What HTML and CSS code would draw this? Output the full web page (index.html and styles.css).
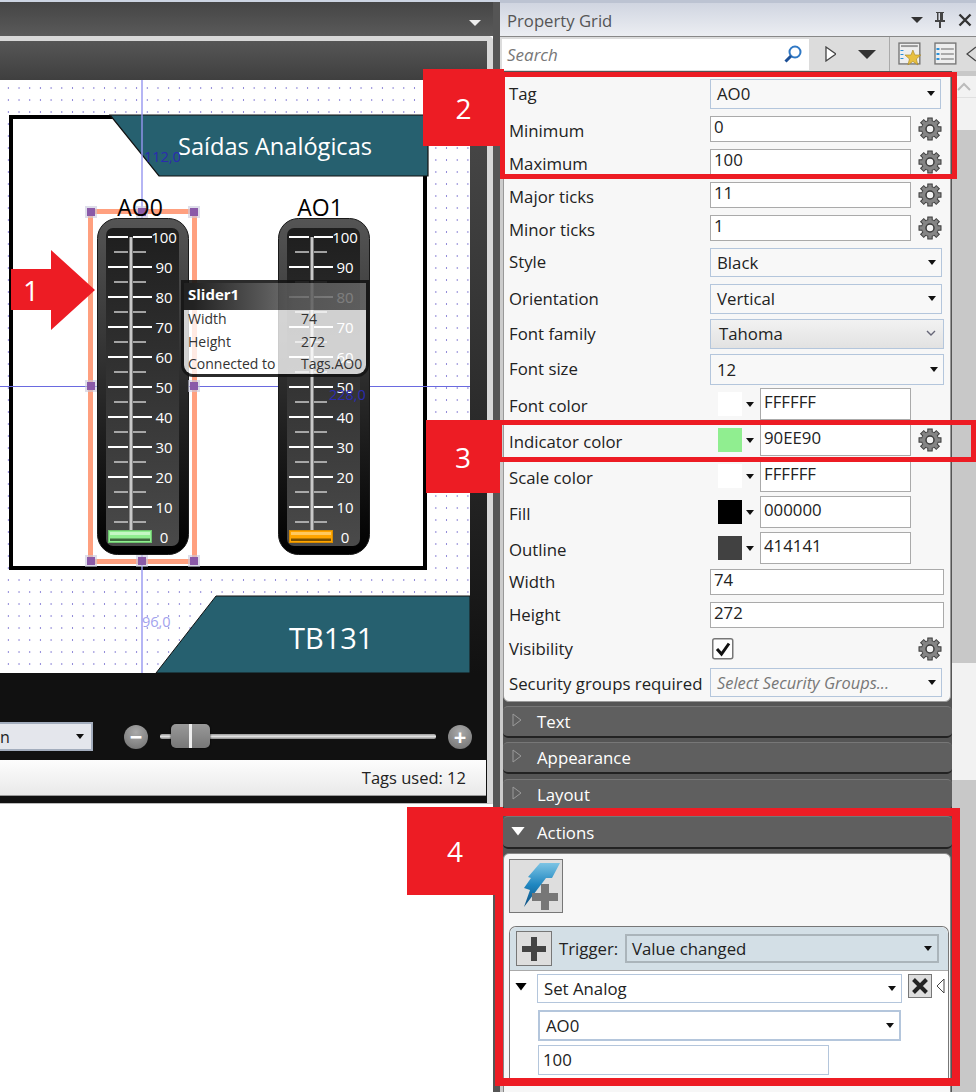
FILE: index.html
```html
<!DOCTYPE html>
<html>
  <head>
    <title>Property Grid</title>
    <link rel="stylesheet" href="styles.css">
  </head>
  <body>
    <svg class="defs" width="0" height="0">
      <defs>
        <linearGradient id="body-grad" x1="0" y1="0" x2="0" y2="1">
          <stop offset="0" stop-color="#555"/>
          <stop offset="1" stop-color="#000"/>
        </linearGradient>
        <linearGradient id="face-grad" x1="0" y1="0" x2="0" y2="1">
          <stop offset="0" stop-color="#1e1e1e"/>
          <stop offset="1" stop-color="#4a4a4a"/>
        </linearGradient>
        <linearGradient id="bolt-grad" x1="0" y1="0" x2="0" y2="1">
          <stop offset="0" stop-color="#7cc4e4"/>
          <stop offset=".5" stop-color="#1f86c0"/>
          <stop offset="1" stop-color="#0d4f80"/>
        </linearGradient>
        <symbol id="gear" viewBox="0 0 24 24">
          <g fill="#858585" stroke="#3c3c3c" stroke-width="1">
            <circle cx="12" cy="12" r="8.4"/>
            <rect x="9.8" y="1" width="4.4" height="5"/>
            <rect x="9.8" y="1" width="4.4" height="5" transform="rotate(45 12 12)"/>
            <rect x="9.8" y="1" width="4.4" height="5" transform="rotate(90 12 12)"/>
            <rect x="9.8" y="1" width="4.4" height="5" transform="rotate(135 12 12)"/>
            <rect x="9.8" y="1" width="4.4" height="5" transform="rotate(180 12 12)"/>
            <rect x="9.8" y="1" width="4.4" height="5" transform="rotate(225 12 12)"/>
            <rect x="9.8" y="1" width="4.4" height="5" transform="rotate(270 12 12)"/>
            <rect x="9.8" y="1" width="4.4" height="5" transform="rotate(315 12 12)"/>
          </g>
          <circle cx="12" cy="12" r="8" fill="#858585"/>
          <circle cx="12" cy="12" r="4" fill="#f4f4f4" stroke="#3c3c3c" stroke-width="1.5"/>
        </symbol>
        <symbol id="gauge" viewBox="0 0 92 338">
          <rect x=".5" y=".5" width="91" height="336" rx="20" fill="url(#body-grad)" stroke="#1a1a1a"/>
          <rect x="9" y="10" width="73" height="318" rx="7" fill="url(#face-grad)"/>
          <g class="major">
            <path d="M11 19H31M36 19H55M11 49H31M36 49H55M11 79H31M36 79H55M11 109H31M36 109H55M11 139H31M36 139H55M11 169H31M36 169H55M11 199H31M36 199H55M11 229H31M36 229H55M11 259H31M36 259H55M11 289H31M36 289H55"/>
          </g>
          <g class="minor">
            <path d="M17 34H31M36 34H49M17 64H31M36 64H49M17 94H31M36 94H49M17 124H31M36 124H49M17 154H31M36 154H49M17 184H31M36 184H49M17 214H31M36 214H49M17 244H31M36 244H49M17 274H31M36 274H49M17 304H31M36 304H49"/>
          </g>
          <rect x="32.5" y="19" width="3" height="294" fill="#c8c8c8"/>
        </symbol>
        <symbol id="tri-open" viewBox="0 0 10 14">
          <path d="M1 1L9 7L1 13Z" fill="none" stroke="#9a9a9a" stroke-width="1"/>
        </symbol>
      </defs>
    </svg>

    <div class="page">
      <div class="left">
        <div class="left-top"><span class="top-caret"></span></div>
        <div class="doc">
          <div class="doc-head"></div>
          <div class="doc-main">
            <div class="canvas">
              <div class="screen"></div>
              <div class="guide-h"></div>
              <svg class="banner-top" width="322" height="64" viewBox="0 0 322 64">
                <polygon points="1,1 319,1 319,62 50,62" fill="#26606f" stroke="#111" stroke-width="1.2"/>
              </svg>
              <div class="guide-v"></div>
              <div class="banner-title">Saídas Analógicas</div>
              <div class="guide-label label-top">112,0</div>

              <svg class="gauge gauge-a" width="92" height="338" viewBox="0 0 92 338">
                <use href="#gauge"/>
                <g class="scale">
                  <text x="67" y="25">100</text><text x="67" y="55">90</text><text x="67" y="85">80</text><text x="67" y="115">70</text>
                  <text x="67" y="145">60</text><text x="67" y="175">50</text><text x="67" y="205">40</text><text x="67" y="235">30</text>
                  <text x="67" y="265">20</text><text x="67" y="295">10</text><text x="67" y="325">0</text>
                </g>
                <rect x="11.5" y="312.5" width="43" height="12" fill="#90ee90" stroke="#6fc46f"/>
                <rect x="13" y="314" width="40" height="3" fill="#c4f7c4"/>
                <rect x="13" y="320.5" width="40" height="2.5" fill="#3f6b3f"/>
              </svg>
              <svg class="gauge gauge-b" width="92" height="338" viewBox="0 0 92 338">
                <use href="#gauge"/>
                <g class="scale">
                  <text x="67" y="25">100</text><text x="67" y="55">90</text><text x="67" y="85">80</text><text x="67" y="115">70</text>
                  <text x="67" y="145">60</text><text x="67" y="175">50</text><text x="67" y="205">40</text><text x="67" y="235">30</text>
                  <text x="67" y="265">20</text><text x="67" y="295">10</text><text x="67" y="325">0</text>
                </g>
                <rect x="11.5" y="312.5" width="43" height="12" fill="#ffa500" stroke="#d98c00"/>
                <rect x="13" y="314" width="40" height="3" fill="#ffc95e"/>
                <rect x="13" y="320.5" width="40" height="2.5" fill="#7a5000"/>
              </svg>

              <div class="selection">
                <span class="handle h-tl"></span><span class="handle h-tc"></span><span class="handle h-tr"></span>
                <span class="handle h-ml"></span><span class="handle h-mr"></span>
                <span class="handle h-bl"></span><span class="handle h-bc"></span><span class="handle h-br"></span>
              </div>

              <div class="gauge-title title-a">AO0</div>
              <div class="gauge-title title-b">AO1</div>

              <div class="tip">
                <div class="tip-head">Slider1</div>
                <div class="tip-body">
                  <span>Width</span><span>74</span>
                  <span>Height</span><span>272</span>
                  <span>Connected to</span><span>Tags.AO0</span>
                </div>
              </div>
              <div class="guide-label label-mid">228,0</div>

              <svg class="banner-bottom" width="316" height="80" viewBox="0 0 316 80">
                <polygon points="61,1 315,1 315,78 1,78" fill="#26606f" stroke="#111" stroke-width="1"/>
              </svg>
              <div class="banner-code">TB131</div>
              <div class="guide-label label-low">96,0</div>
            </div>
            <div class="doc-strip"></div>
          </div>
          <div class="zoom-bar">
            <div class="zoom-select"><span>n</span><i class="caret"></i></div>
            <span class="zoom-btn">&#8722;</span>
            <div class="zoom-track"><span class="zoom-thumb"></span></div>
            <span class="zoom-btn">+</span>
          </div>
          <div class="status">Tags used: 12</div>
        </div>
      </div>

      <div class="divider"></div>

      <div class="side">
        <div class="side-head">
          <span class="side-title">Property Grid</span>
          <i class="head-caret"></i>
          <svg class="pin" width="14" height="18" viewBox="0 0 14 18"><path d="M3 1H11V2H10V9H12V11H8V17H6V11H2V9H4V2H3ZM5.5 2V9H7V2Z" fill="#444"/></svg>
          <svg class="close" width="14" height="14" viewBox="0 0 14 14"><path d="M1.5 1.5L12.5 12.5M12.5 1.5L1.5 12.5" stroke="#333" stroke-width="2.4"/></svg>
        </div>
        <div class="search-row">
          <div class="search-box">
            <span>Search</span>
            <svg width="20" height="20" viewBox="0 0 20 20"><circle cx="12" cy="8" r="5.5" fill="#fff" stroke="#2f78c4" stroke-width="2"/><path d="M8 12L2.5 17.5" stroke="#1c4f96" stroke-width="3"/></svg>
          </div>
          <svg class="tool-play" width="12" height="16" viewBox="0 0 12 16"><path d="M1 1L11 8L1 15Z" fill="#fff" stroke="#444" stroke-width="1.3"/></svg>
          <i class="tool-down"></i>
          <span class="tool-sep"></span>
          <svg class="tool-icon" width="24" height="24" viewBox="0 0 24 24">
            <rect x="1" y="1" width="21" height="21" fill="#eee" stroke="#777" stroke-width="1.4"/>
            <path d="M3 4H20" stroke="#999" stroke-width="2"/>
            <path d="M4 8V9M4 12V13M4 16V17" stroke="#2a90d8" stroke-width="3"/>
            <polygon points="15,8 17,13 23,13 18.5,17 20,23 15,19.5 10,23 11.5,17 7,13 13,13" fill="#e8c040" stroke="#a58320" stroke-width=".6"/>
          </svg>
          <svg class="tool-icon" width="24" height="24" viewBox="0 0 24 24">
            <rect x="1" y="1" width="21" height="21" fill="#eee" stroke="#777" stroke-width="1.4"/>
            <path d="M4 6V8M4 11V13M4 16V18" stroke="#2a90d8" stroke-width="3"/>
            <path d="M7 7H20M7 12H20M7 17H20" stroke="#aaa" stroke-width="2"/>
          </svg>
          <svg class="tool-back" width="10" height="16" viewBox="0 0 10 16"><path d="M10 1L1 8L10 15" fill="none" stroke="#444" stroke-width="1.2"/></svg>
        </div>

        <div class="side-body">
          <div class="side-main">
            <div class="props">
              <div class="prop h30"><label>Tag</label><div class="pick w231"><span>AO0</span><i class="caret"></i></div></div>
              <div class="prop h26 low"><label>Minimum</label><div class="field w201">0</div><svg class="gear"><use href="#gear"/></svg></div>
              <div class="prop h26 low"><label>Maximum</label><div class="field w201">100</div><svg class="gear"><use href="#gear"/></svg></div>
              <div class="prop h26 low"><label>Major ticks</label><div class="field w201">11</div><svg class="gear"><use href="#gear"/></svg></div>
              <div class="prop h26 low"><label>Minor ticks</label><div class="field w201">1</div><svg class="gear"><use href="#gear"/></svg></div>
              <div class="prop h29"><label>Style</label><div class="pick w232"><span>Black</span><i class="caret"></i></div></div>
              <div class="prop h30"><label>Orientation</label><div class="pick w232"><span>Vertical</span><i class="caret"></i></div></div>
              <div class="prop h30 gap5"><label>Font family</label>
                <div class="pick w234 pick-font"><span>Tahoma</span>
                  <svg width="10" height="7" viewBox="0 0 10 7"><path d="M1 1L5 5L9 1" fill="none" stroke="#667" stroke-width="1.4"/></svg>
                </div>
              </div>
              <div class="prop h31 gap5"><label>Font size</label><div class="pick w234"><span>12</span><i class="caret"></i></div></div>
              <div class="prop h32 gap3 low"><label>Font color</label><span class="swatch sw-white"></span><i class="caret sw-caret"></i><div class="field w151 hex">FFFFFF</div></div>
              <div class="prop h32 gap4 low"><label>Indicator color</label><span class="swatch sw-green"></span><i class="caret sw-caret"></i><div class="field w151 hex">90EE90</div><svg class="gear"><use href="#gear"/></svg></div>
              <div class="prop h32 gap4 low"><label>Scale color</label><span class="swatch sw-white"></span><i class="caret sw-caret"></i><div class="field w151 hex">FFFFFF</div></div>
              <div class="prop h32 gap4 low"><label>Fill</label><span class="swatch sw-black"></span><i class="caret sw-caret"></i><div class="field w151 hex">000000</div></div>
              <div class="prop h32 gap4 low"><label>Outline</label><span class="swatch sw-grey"></span><i class="caret sw-caret"></i><div class="field w151 hex">414141</div></div>
              <div class="prop h26 gap5"><label>Width</label><div class="field w234">74</div></div>
              <div class="prop h26"><label>Height</label><div class="field w234">272</div></div>
              <div class="prop h28"><label>Visibility</label>
                <svg class="check" width="22" height="22" viewBox="0 0 22 22"><rect x=".75" y=".75" width="20" height="20" rx="2" fill="#fff" stroke="#777" stroke-width="1.5"/><path d="M5 11L9.5 16L17 5.5" fill="none" stroke="#111" stroke-width="3"/></svg>
                <svg class="gear gear-far"><use href="#gear"/></svg>
              </div>
              <div class="prop h29 gap5 sec-row"><label>Security groups required</label><div class="pick w232 pick-hint"><span>Select Security Groups...</span><i class="caret"></i></div></div>
            </div>

            <div class="section"><svg class="tri-open"><use href="#tri-open"/></svg>Text</div>
            <div class="section"><svg class="tri-open"><use href="#tri-open"/></svg>Appearance</div>
            <div class="section"><svg class="tri-open"><use href="#tri-open"/></svg>Layout</div>
            <div class="section section-open"><i class="tri-down"></i>Actions</div>

            <div class="actions">
              <div class="add-action">
                <svg width="52" height="52" viewBox="0 0 52 52">
                  <polygon points="30,3 50,3 42,18 36,18 14,47 20,30 14,28 21,18 18,17" fill="url(#bolt-grad)"/>
                  <path d="M35 24V50M22 37H48" stroke="#777" stroke-width="8"/>
                </svg>
              </div>
              <div class="trigger">
                <div class="trigger-head">
                  <span class="plus-btn"><svg width="28" height="28" viewBox="0 0 28 28"><path d="M14 2V26M2 14H26" stroke="#444" stroke-width="6"/></svg></span>
                  <span class="trigger-label">Trigger:</span>
                  <div class="pick trigger-pick"><span>Value changed</span><i class="caret"></i></div>
                </div>
                <div class="trigger-body">
                  <div class="act-row">
                    <i class="tri-black"></i>
                    <div class="pick act-pick"><span>Set Analog</span><i class="caret"></i></div>
                    <span class="x-btn"><svg width="18" height="18" viewBox="0 0 18 18"><path d="M2.5 2.5L15.5 15.5M15.5 2.5L2.5 15.5" stroke="#222" stroke-width="4"/></svg></span>
                    <svg class="act-back" width="9" height="16" viewBox="0 0 9 16"><path d="M8 1L1 8L8 15Z" fill="#fff" stroke="#444"/></svg>
                  </div>
                  <div class="pick act-tag"><span>AO0</span><i class="caret"></i></div>
                  <div class="field act-val">100</div>
                </div>
              </div>
            </div>
          </div>
          <div class="scroll">
            <div class="scroll-up"><svg width="14" height="9" viewBox="0 0 14 9"><path d="M1 8L7 2L13 8" fill="none" stroke="#bbb" stroke-width="2"/></svg></div>
            <div class="scroll-thumb"></div>
            <div class="scroll-gap"></div>
            <div class="scroll-rest"></div>
          </div>
        </div>
      </div>
    </div>

    <!-- red callouts drawn over the screenshot -->
    <div class="frame frame-2"></div>
    <div class="frame frame-3"></div>
    <div class="frame frame-4"></div>
    <div class="tag tag-2">2</div>
    <div class="tag tag-3">3</div>
    <div class="tag tag-4">4</div>
    <svg class="arrow" width="84" height="80" viewBox="0 0 84 80"><polygon points="0,19 40,19 40,0 84,40 40,80 40,60 0,60" fill="#ed1c24"/></svg>
    <div class="arrow-num">1</div>
  </body>
</html>
```

FILE: styles.css
```css
html, body {
  margin: 0;
  padding: 0;
}
body {
  position: relative;
  width: 976px;
  height: 1092px;
  overflow: hidden;
  background: #fff;
  font-family: "Open Sans", "Noto Sans", sans-serif;
  font-size: 15px;
  color: #222;
}
.defs {
  position: absolute;
}
.page {
  display: flex;
  height: 1092px;
}
i {
  display: block;
}
.caret {
  width: 0;
  height: 0;
  border: 4px solid transparent;
  border-top: 5px solid #111;
  border-bottom: 0;
}

/* left: designer */
.left {
  width: 493px;
  flex: none;
  background: #fff;
}
.left-top {
  display: flex;
  justify-content: flex-end;
  align-items: center;
  box-sizing: border-box;
  height: 36px;
  padding: 8px 12px 0 0;
  border-top: 2px solid #ccd4e2;
  background: linear-gradient(#454545, #5a5a5a);
}
.top-caret {
  width: 0;
  height: 0;
  border: 6px solid transparent;
  border-top: 6px solid #eee;
  border-bottom: 0;
}
.doc {
  box-sizing: border-box;
  width: 493px;
  height: 768px;
  background: #111;
  border-top: 5px solid #d8d8d8;
  border-right: 6px solid #d8d8d8;
  border-top-right-radius: 5px;
  border-bottom: 1px solid #bbb;
}
.doc-head {
  height: 39px;
  background: linear-gradient(#565656, #3f3f3f);
}
.doc-main {
  display: flex;
  height: 593px;
}
.canvas {
  position: relative;
  width: 470px;
  height: 593px;
  overflow: hidden;
  background-color: #fff;
  background-image: radial-gradient(circle, #8f88d8 .7px, transparent 1.1px);
  background-size: 10.7px 12px;
  background-position: 3px 2px;
}
.doc-strip {
  flex: 1;
  background: linear-gradient(#4c4c4c, #111);
}
.screen {
  position: absolute;
  left: 9px;
  top: 35px;
  box-sizing: border-box;
  width: 418px;
  height: 455px;
  background: #fff;
  border: 4px solid #000;
}
.guide-v {
  position: absolute;
  left: 141px;
  top: 0;
  width: 2px;
  height: 593px;
  background: rgba(150, 150, 240, .7);
}
.guide-h {
  position: absolute;
  left: 0;
  top: 306px;
  width: 470px;
  height: 1px;
  background: #6a6ae0;
}
.guide-label {
  position: absolute;
  font-size: 14.5px;
  line-height: 18px;
  color: #2b2bb0;
}
.label-top {
  left: 144px;
  top: 68px;
}
.label-mid {
  left: 329px;
  top: 306px;
}
.label-low {
  left: 142px;
  top: 533px;
  color: #a2a2ee;
}
.banner-top {
  position: absolute;
  left: 109px;
  top: 34px;
}
.banner-title {
  position: absolute;
  left: 178px;
  top: 48px;
  font-size: 23.6px;
  line-height: 36px;
  color: #fff;
}
.banner-bottom {
  position: absolute;
  left: 155px;
  top: 515px;
}
.banner-code {
  position: absolute;
  left: 289px;
  top: 538px;
  font-size: 29px;
  line-height: 40px;
  color: #fff;
}
.gauge-title {
  position: absolute;
  top: 110px;
  width: 80px;
  text-align: center;
  font-size: 23px;
  line-height: 34px;
  color: #000;
}
.title-a {
  left: 100px;
}
.title-b {
  left: 280px;
}
.gauge {
  position: absolute;
  top: 138px;
}
.gauge-a {
  left: 97px;
}
.gauge-b {
  left: 278px;
}
.major path {
  fill: none;
  stroke: #fff;
  stroke-width: 2;
}
.minor path {
  fill: none;
  stroke: #ccc;
  stroke-width: 1.3;
}
.scale text {
  fill: #fff;
  font-size: 15px;
  text-anchor: middle;
}
.selection {
  position: absolute;
  left: 88px;
  top: 129px;
  box-sizing: border-box;
  width: 109px;
  height: 355px;
  border: 5px solid #ffa07f;
}
.handle {
  position: absolute;
  width: 8px;
  height: 8px;
  background: #8a5aa8;
  box-shadow: 0 0 0 2px rgba(200, 200, 220, .6);
}
.h-tl, .h-ml, .h-bl {
  left: -6px;
}
.h-tr, .h-mr, .h-br {
  right: -6px;
}
.h-tc, .h-bc {
  left: 45px;
}
.h-tl, .h-tc, .h-tr {
  top: -6px;
}
.h-ml, .h-mr {
  top: 168px;
}
.h-bl, .h-bc, .h-br {
  bottom: -6px;
}
.tip {
  position: absolute;
  left: 181px;
  top: 200px;
  box-sizing: border-box;
  width: 188px;
  height: 97px;
  overflow: hidden;
  border: 3px solid rgba(20, 20, 20, .9);
  border-radius: 0 0 12px 12px;
}
.tip-head {
  box-sizing: border-box;
  height: 27px;
  padding-left: 4px;
  font-size: 15px;
  font-weight: 700;
  line-height: 23px;
  color: #fff;
  background: linear-gradient(90deg, #222 5%, rgba(90, 90, 90, .88) 60%, rgba(105, 105, 105, .82));
}
.tip-body {
  display: grid;
  grid-template-columns: 113px 1fr;
  grid-auto-rows: 22.5px;
  height: 64px;
  padding: 0 0 3px 4px;
  font-size: 14px;
  line-height: 18px;
  color: #333;
  background: rgba(255, 255, 255, .78);
}

/* zoom bar and status */
.zoom-bar {
  display: flex;
  align-items: center;
  box-sizing: border-box;
  height: 87px;
  padding-top: 49px;
  padding-bottom: 9px;
  background: #111;
}
.zoom-select {
  display: flex;
  justify-content: space-between;
  align-items: center;
  box-sizing: border-box;
  width: 93px;
  height: 29px;
  padding-right: 7px;
  background: #e4e6ec;
  border: 2px solid #a3adbd;
  border-left: 0;
  font-size: 16px;
}
.zoom-btn {
  flex: none;
  width: 24px;
  height: 24px;
  margin-left: 31px;
  border-radius: 50%;
  background: radial-gradient(circle at 50% 30%, #aaa, #6e6e6e);
  color: #fff;
  font-size: 22px;
  font-weight: 700;
  line-height: 22px;
  text-align: center;
}
.zoom-track {
  position: relative;
  width: 276px;
  height: 5px;
  margin-left: 12px;
  border-radius: 2px;
  background: linear-gradient(#999, #e0e0e0 50%, #888);
}
.zoom-track + .zoom-btn {
  margin-left: 12px;
}
.zoom-thumb {
  position: absolute;
  left: 11px;
  top: -10px;
  box-sizing: border-box;
  width: 39px;
  height: 24px;
  border-radius: 5px;
  background: linear-gradient(90deg, transparent 47%, #eee 47%, #eee 53%, transparent 53%), linear-gradient(#999, #777);
  box-shadow: 0 0 2px #000;
}
.status {
  box-sizing: border-box;
  height: 36px;
  margin-right: 1px;
  padding-right: 20px;
  background: linear-gradient(#fdfdfd, #e9e9e9);
  border-bottom: 1px solid #999;
  font-size: 16.5px;
  line-height: 36px;
  text-align: right;
}

.divider {
  width: 7px;
  flex: none;
  background: #555;
  border-top: 2px solid #ccd4e2;
}

/* right: property grid */
.side {
  width: 476px;
  flex: none;
  background: #c8c8c8;
}
.side-head {
  display: flex;
  align-items: center;
  box-sizing: border-box;
  height: 37px;
  padding: 1px 0 0 7px;
  border-top: 3px solid #bcc3d2;
  border-bottom: 1px solid #888;
  background: linear-gradient(#d0d5e1, #eceef2);
}
.side-title {
  flex: 1;
  font-size: 16.7px;
  color: #555;
}
.head-caret {
  width: 0;
  height: 0;
  margin-right: 10px;
  border: 6px solid transparent;
  border-top: 6px solid #333;
  border-bottom: 0;
}
.pin {
  margin-right: 11px;
}
.close {
  margin-right: 4px;
}
.search-row {
  display: flex;
  align-items: center;
  height: 34px;
  background: #dcdcdc;
}
.search-box {
  display: flex;
  justify-content: space-between;
  align-items: center;
  box-sizing: border-box;
  width: 309px;
  height: 31px;
  margin-left: 2px;
  padding: 0 6px 0 5px;
  background: #fff;
  font-size: 17px;
  font-style: italic;
  color: #777;
}
.tool-play {
  margin-left: 16px;
}
.tool-down {
  width: 0;
  height: 0;
  margin-left: 22px;
  border: 9px solid transparent;
  border-top: 9px solid #333;
  border-bottom: 0;
}
.tool-sep {
  width: 1px;
  height: 34px;
  margin: 0 8px 0 13px;
  background: #aaa;
}
.tool-icon {
  margin-right: 12px;
}
.tool-back {
  margin-left: -4px;
}
.side-body {
  display: flex;
}
.side-main {
  width: 452px;
  flex: none;
  height: 1021px;
  padding-top: 5px;
  background: #555;
  box-sizing: border-box;
  border-left: 3px solid #ccc;
}
.props {
  box-sizing: border-box;
  width: 448px;
  height: 626px;
  padding: 2px 0 0 5px;
  background: #f7f7f7;
  border: 1px solid #999;
  border-radius: 0 0 6px 6px;
}
.prop {
  display: flex;
  align-items: center;
  margin-top: 7px;
}
.prop:first-child {
  margin-top: 0;
}
.prop label {
  width: 201px;
  flex: none;
  padding-bottom: 2px;
  font-size: 16.8px;
  color: #222;
  white-space: nowrap;
}
.low label {
  padding-top: 2px;
  padding-bottom: 0;
}
.sec-row label {
  padding: 2px 0 0;
}
.gap3 {
  margin-top: 3px;
}
.gap4 {
  margin-top: 4px;
}
.gap5 {
  margin-top: 5px;
}
.h26 { height: 26px; }
.h28 { height: 28px; }
.h29 { height: 29px; }
.h30 { height: 30px; }
.h31 { height: 31px; }
.h32 { height: 32px; }
.w151 { width: 151px; }
.w201 { width: 201px; }
.w231 { width: 231px; }
.w232 { width: 232px; }
.w234 { width: 234px; }
.pick {
  display: flex;
  justify-content: space-between;
  align-items: center;
  box-sizing: border-box;
  height: 100%;
  padding: 0 5px 1px 6px;
  background: #f8f8f8;
  border: 1px solid #b4c6dc;
  font-size: 16.8px;
}
.pick-font {
  padding: 0 7px 1px 8px;
  background: linear-gradient(#f2f2f2, #e2e2e2);
}
.pick-hint {
  font-size: 16.4px;
  font-style: italic;
  color: #777;
}
.pick-hint .caret {
  flex: none;
}
.field {
  box-sizing: border-box;
  height: 100%;
  padding-left: 3px;
  background: #fff;
  border: 1px solid #aaa;
  font-size: 16.8px;
  line-height: 20px;
}
.hex {
  line-height: 26px;
}
.gear {
  flex: none;
  width: 24px;
  height: 24px;
  margin-left: 7px;
}
.gear-far {
  margin-left: 184px;
}
.check {
  margin-left: 2px;
}
.swatch {
  flex: none;
  width: 24px;
  height: 24px;
  margin-left: 8px;
}
.sw-white { background: #fff; }
.sw-green { background: #90ee90; }
.sw-black { background: #000; }
.sw-grey { background: #414141; }
.sw-caret {
  flex: none;
  margin: 0 6px 0 4px;
}
.section {
  display: flex;
  align-items: center;
  box-sizing: border-box;
  width: 449px;
  height: 32px;
  margin-top: 4px;
  background: #5f5f5f;
  border-bottom: 2px solid #222;
  border-top: 1px solid #777;
  border-radius: 5px;
  font-size: 16.8px;
  color: #fff;
}
.section:nth-child(4) {
  margin-top: 5px;
}
.section-open {
  height: 33px;
  margin-top: 5px;
}
.tri-open {
  flex: none;
  width: 10px;
  height: 14px;
  margin: 0 15px 4px 9px;
}
.tri-down {
  width: 14px;
  height: 9px;
  margin: 0 12px 2px 8px;
  background: #fff;
  clip-path: polygon(0 0, 100% 0, 50% 100%);
}
.actions {
  box-sizing: border-box;
  width: 448px;
  height: 260px;
  margin-top: 4px;
  padding: 5px 5px 0 5px;
  background: #f7f7f7;
  border: 1px solid #888;
  border-radius: 6px 6px 0 0;
}
.add-action {
  box-sizing: border-box;
  width: 54px;
  height: 54px;
  background: #dedede;
  border: 1px solid #777;
}
.trigger {
  width: 438px;
  margin-top: 13px;
  background: #fff;
  border: 1px solid #777;
  border-bottom: 0;
  border-radius: 7px 7px 0 0;
}
.trigger-head {
  display: flex;
  align-items: center;
  height: 43px;
  padding-left: 6px;
  background: #d3dfe6;
  border-bottom: 1px solid #aaa;
  border-radius: 7px 7px 0 0;
}
.plus-btn {
  display: flex;
  justify-content: center;
  align-items: center;
  flex: none;
  box-sizing: border-box;
  width: 36px;
  height: 35px;
  background: #dedede;
  border: 1px solid #777;
}
.trigger-label {
  flex: none;
  width: 59px;
  margin: 0 7px 0 7px;
  font-size: 16.8px;
  white-space: nowrap;
}
.trigger-pick {
  width: 314px;
  height: 29px;
  padding-left: 5px;
  background: #d3dfe6;
  border: 2px solid #aab4ba;
}
.trigger-body {
  padding-top: 3px;
  height: 110px;
}
.act-row {
  display: flex;
  align-items: center;
  height: 29px;
}
.tri-black {
  width: 12px;
  height: 8px;
  margin: 0 10px 4px 5px;
  background: #000;
  clip-path: polygon(0 0, 100% 0, 50% 100%);
}
.act-pick {
  width: 365px;
  height: 29px;
  padding-bottom: 0;
  background: #fff;
}
.x-btn {
  display: flex;
  justify-content: center;
  align-items: center;
  box-sizing: border-box;
  width: 24px;
  height: 24px;
  margin: 0 4px 5px 6px;
  background: #ddd;
  border: 1px solid #777;
}
.act-back {
  margin-bottom: 6px;
}
.act-tag {
  width: 363px;
  height: 31px;
  margin: 7px 0 0 28px;
  background: #fff;
  border-width: 2px;
}
.act-val {
  width: 291px;
  height: 30px;
  margin: 4px 0 0 28px;
  padding-left: 4px;
  border: 1px solid #b4c6dc;
  line-height: 28px;
}
.scroll {
  flex: 1;
  height: 1021px;
  padding-top: 5px;
  box-sizing: border-box;
  background: #c8c8c8;
}
.scroll-up {
  display: flex;
  justify-content: center;
  padding-top: 6px;
  box-sizing: border-box;
  height: 22px;
  background: #f2f2f2;
  border-bottom: 1px solid #e0e0e0;
}
.scroll-thumb {
  height: 32px;
  background: #f2f2f2;
}
.scroll-gap {
  height: 533px;
  background: #c8c8c8;
}
.scroll-rest {
  height: 117px;
  background: #f2f2f2;
}

/* callouts */
.frame {
  position: absolute;
  box-sizing: border-box;
  border: 5px solid #ed1c24;
}
.frame-2 {
  left: 500px;
  top: 72px;
  width: 457px;
  height: 107px;
}
.frame-3 {
  left: 497px;
  top: 420px;
  width: 479px;
  height: 42px;
}
.frame-4 {
  left: 495px;
  top: 808px;
  width: 465px;
  height: 278px;
  border-width: 8px;
}
.tag {
  position: absolute;
  display: flex;
  justify-content: center;
  align-items: center;
  color: #fff;
  font-size: 28px;
  background: #ed1c24;
}
.tag-2 {
  left: 423px;
  top: 69px;
  width: 81px;
  height: 77px;
}
.tag-3 {
  left: 426px;
  top: 420px;
  width: 74px;
  height: 73px;
}
.tag-4 {
  left: 407px;
  top: 807px;
  width: 96px;
  height: 88px;
}
.arrow {
  position: absolute;
  left: 11px;
  top: 250px;
}
.arrow-num {
  position: absolute;
  left: 11px;
  top: 270px;
  width: 40px;
  text-align: center;
  color: #fff;
  font-size: 28px;
  line-height: 40px;
}
```
